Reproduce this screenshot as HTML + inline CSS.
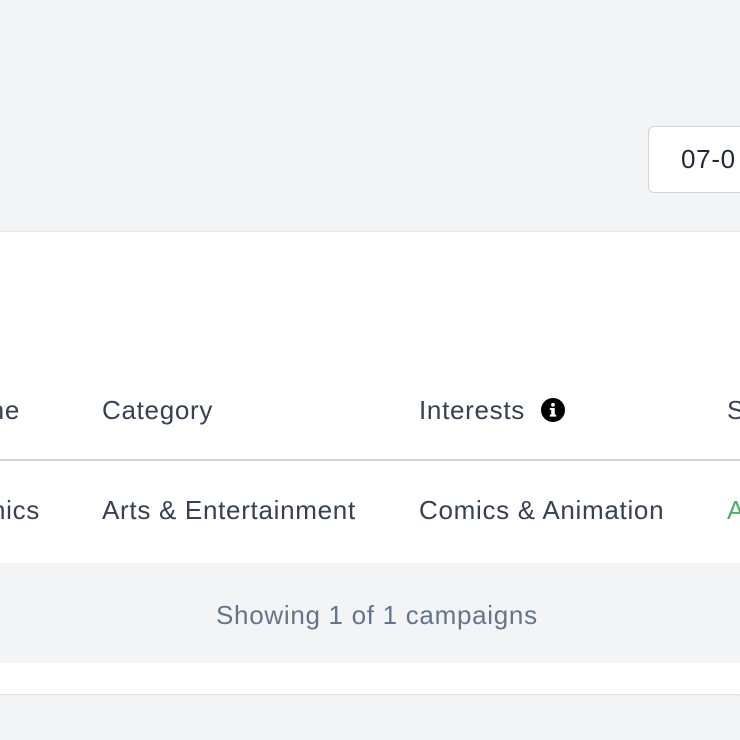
<!DOCTYPE html>
<html><head><meta charset="utf-8"><style>
html,body{margin:0;padding:0;}
body{width:740px;height:740px;background:#f3f4f6;position:relative;overflow:hidden;font-family:"Liberation Sans",sans-serif;}
.t{position:absolute;font-size:26px;letter-spacing:0.7px;color:#374151;white-space:nowrap;line-height:1;}
.r{text-align:right;}
</style></head><body>
<div style="position:absolute;left:648px;top:126px;width:120px;height:67px;border:1.5px solid #d1d5db;border-radius:6px;background:#fff;box-sizing:border-box;"></div>
<div class="t" style="left:681px;top:146px;color:#1f2937;">07-0</div>
<div style="position:absolute;left:0;top:231px;width:740px;height:462px;background:#fff;border-top:1px solid #e5e7eb;box-shadow:0 1px 2px rgba(0,0,0,0.1);"></div>
<div class="t r" style="right:720px;top:397px;">ne</div>
<div class="t" style="left:102px;top:397px;">Category</div>
<div class="t" style="left:419px;top:397px;">Interests</div>
<svg style="position:absolute;left:541px;top:398px" width="24" height="24" viewBox="0 0 24 24"><circle cx="12" cy="12" r="12" fill="#000"/><circle cx="12" cy="6.8" r="1.9" fill="#fff"/><rect x="10.2" y="10" width="3.6" height="8.5" rx="0.6" fill="#fff"/><rect x="8.8" y="10" width="3" height="2" fill="#fff"/><rect x="8.8" y="16.6" width="6.4" height="2" fill="#fff"/></svg>
<div class="t" style="left:727px;top:397px;">S</div>
<div style="position:absolute;left:0;top:459px;width:740px;height:2px;background:#d1d5db;"></div>
<div class="t r" style="right:700px;top:497px;">nics</div>
<div class="t" style="left:102px;top:497px;">Arts &amp; Entertainment</div>
<div class="t" style="left:419px;top:497px;">Comics &amp; Animation</div>
<div class="t" style="left:727px;top:497px;color:#4caf6a;">A</div>
<div style="position:absolute;left:0;top:563px;width:740px;height:100px;background:#f3f4f6;"></div>
<div class="t" style="left:216px;top:602px;color:#64748b;">Showing 1 of 1 campaigns</div>
</body></html>
